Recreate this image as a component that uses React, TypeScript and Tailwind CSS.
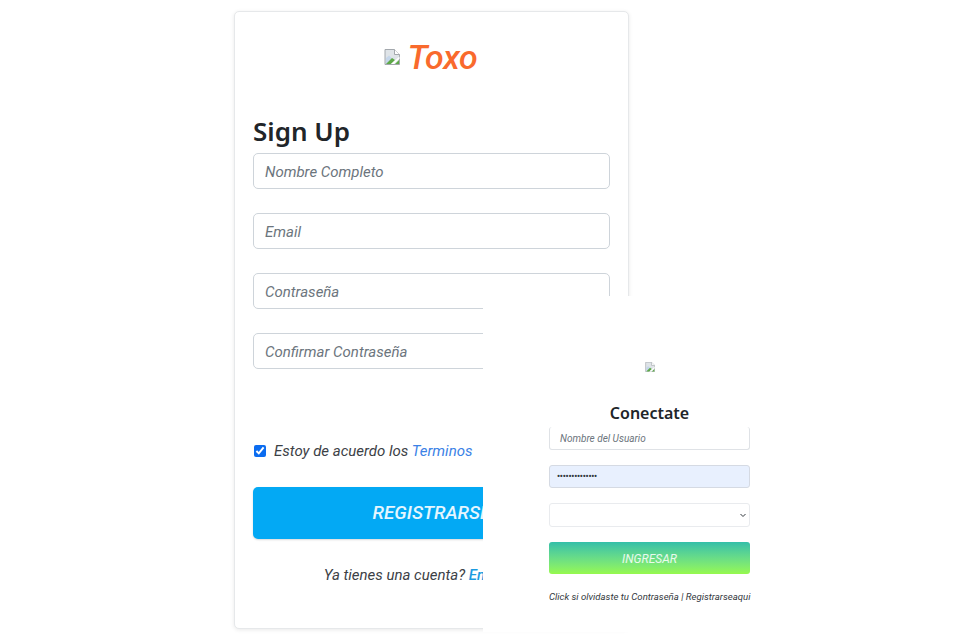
function BrokenImg({ size }: { size: number }) {
  return (
    <svg width={size} height={size} viewBox="0 0 16 16" className="shrink-0">
      <path d="M1 0.5H10.5L15.5 5.5V15.5H1Z" fill="#dfe4e8" stroke="#a3a8ad" strokeWidth="1" />
      <path d="M10.5 0.5V5.5H15.5" fill="#fff" stroke="#a3a8ad" strokeWidth="1" />
      <path d="M2 9L5 6.5L8 9.5L11 8L3 15H2Z" fill="#c5d6ea" />
      <path d="M2 15L8 9L11 11L7 15Z" fill="#5fa948" />
      <path d="M11 15L15 11V15Z" fill="#5fa948" />
      <path d="M7 15L15.5 7.5V9.5L10 15Z" fill="#fff" />
    </svg>
  );
}

function Field({ placeholder }: { placeholder: string }) {
  return (
    <input
      placeholder={placeholder}
      className="block w-full h-[36px] border border-[#ced4da] rounded-[5px] bg-white px-[11px] pt-[2px] text-[15px] italic text-[#495057] placeholder:text-[#6c757d] placeholder:opacity-100 outline-none font-['Roboto',sans-serif]"
    />
  );
}

export default function App() {
  return (
    <div className="relative w-[965px] h-[644px] overflow-hidden bg-white font-['Roboto',sans-serif]">
      <div className="pt-[11px] pl-[234px]">
        <div className="w-[395px] h-[618px] bg-white rounded-[5px] border border-[#e6e8ea] shadow-[0_1px_4px_rgba(0,0,0,0.09)] pl-[18px] pr-[18px]">
          <div className="flex items-center justify-center gap-[8px] pt-[25px] h-[64px] pr-[2px]">
            <BrokenImg size={16} />
            <span className="text-[34px] leading-[40px] italic font-medium text-[#f96a2d] tracking-[-0.3px]">Toxo</span>
          </div>
          <h1 className="mt-[36px] text-[26px] leading-[39px] font-semibold text-[#212529] font-['Noto_Sans',sans-serif]">Sign Up</h1>
          <div className="flex flex-col gap-[24px] mt-[2px]">
            <Field placeholder="Nombre Completo" />
            <Field placeholder="Email" />
            <Field placeholder="Contraseña" />
            <Field placeholder="Confirmar Contraseña" />
          </div>
          <label className="flex items-center gap-[8px] mt-[71px] pl-[1px] text-[15px] leading-[22px] italic text-[#3c4146]">
            <input type="checkbox" defaultChecked className="w-[12px] h-[12px] m-0 accent-[#0b6cf0]" />
            <span>
              Estoy de acuerdo los <span className="text-[#3b82e6]">Terminos</span>
            </span>
          </label>
          <button className="block w-full h-[52px] mt-[25px] pt-[1px] rounded-[5px] bg-[#03a9f4] text-white/90 italic font-medium text-[18.8px] shadow-[0_1px_2px_rgba(0,0,0,0.15)]">
            REGISTRARSE
          </button>
          <p className="mt-[25px] text-center text-[15px] leading-[22px] italic text-[#3c4146]">
            Ya tienes una cuenta? <span className="text-[#1a9be0] font-medium">Entrar aqui</span>
          </p>
        </div>
      </div>

      <div className="absolute left-[483px] top-[296px] w-[268px] h-[336px] bg-white pl-[66px] pr-[1px]">
        <div className="flex justify-center pt-[66px]">
          <BrokenImg size={10} />
        </div>
        <h2 className="mt-[29px] text-center text-[16px] leading-[24px] font-semibold text-[#212529] font-['Noto_Sans',sans-serif]">Conectate</h2>
        <div className="mt-[2px] h-[23px] w-full border border-t-0 border-[#dfe2e6] rounded-[3px] bg-white pl-[10px] pt-[1px] flex items-center text-[10px] italic text-[#6c757d]">
          Nombre del Usuario
        </div>
        <div className="mt-[15px] h-[23px] w-full border border-[#d5dae3] rounded-[3px] bg-[#e8f0fe] px-[7px] flex items-center text-[8.5px] font-bold text-[#333a40] tracking-[-0.2px]">
          ••••••••••••••
        </div>
        <div className="mt-[15px] h-[24px] w-full border border-[#e9ebee] rounded-[3px] bg-white flex items-center justify-end pr-[2px]">
          <svg width="8" height="8" viewBox="0 0 8 8" fill="none" stroke="#343a40" strokeWidth="1"><path d="M1.5 3L4 5.5L6.5 3" /></svg>
        </div>
        <button className="block mt-[15px] w-full h-[32px] rounded-[3px] bg-gradient-to-b from-[#33bfa8] to-[#96f94c] text-white/85 italic text-[12px] pt-[1px]">
          INGRESAR
        </button>
        <p className="mt-[17px] text-[9.6px] leading-[12px] italic text-[#33383d] whitespace-nowrap">
          Click si olvidaste tu Contraseña | Registrarseaqui
        </p>
      </div>
    </div>
  );
}
